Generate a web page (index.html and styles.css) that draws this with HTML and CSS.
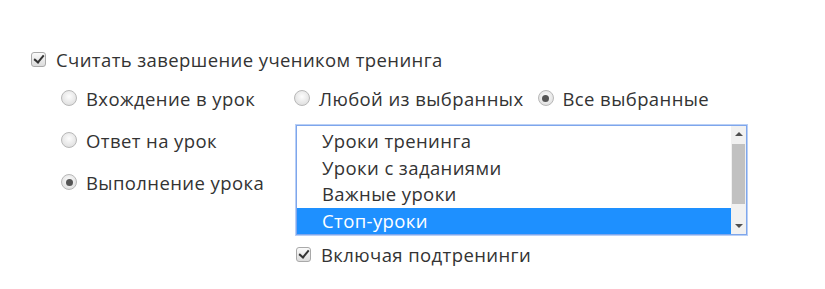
FILE: index.html
```html
<!DOCTYPE html>
<html lang="ru">
<head>
    <meta charset="UTF-8">
    <title>Завершение тренинга</title>
    <link rel="stylesheet" href="styles.css">
</head>
<body>
    <form class="completion">
        <!-- main switch -->
        <label class="check_row">
            <span class="check checked"></span>
            Считать завершение учеником тренинга
        </label>

        <div class="columns">
            <!-- what counts as completion -->
            <div class="left_col">
                <label class="radio_row"><span class="radio"></span>Вхождение в урок</label>
                <label class="radio_row"><span class="radio"></span>Ответ на урок</label>
                <label class="radio_row"><span class="radio checked"></span>Выполнение урока</label>
            </div>

            <!-- which lessons -->
            <div class="right_col">
                <div class="mode_row">
                    <label class="radio_row"><span class="radio"></span>Любой из выбранных</label>
                    <label class="radio_row"><span class="radio checked"></span>Все выбранные</label>
                </div>

                <div class="listbox">
                    <ul class="options">
                        <li>Уроки тренинга</li>
                        <li>Уроки с заданиями</li>
                        <li>Важные уроки</li>
                        <li class="selected">Стоп-уроки</li>
                    </ul>
                    <div class="scrollbar">
                        <span class="arrow up"></span>
                        <span class="thumb"></span>
                        <span class="arrow down"></span>
                    </div>
                </div>

                <label class="check_row sub">
                    <span class="check checked"></span>
                    Включая подтренинги
                </label>
            </div>
        </div>
    </form>
</body>
</html>
```

FILE: styles.css
```css
body {
    margin: 0;
    background: #fff;
    color: #333;
    font-family: "Open Sans", sans-serif;
    font-size: 18.5px;
    letter-spacing: 0.4px;
}

.completion {
    padding: 44px 0 0 31px;
}

.check_row {
    display: flex;
    align-items: center;
    height: 30px;
}

.check {
    width: 13px;
    height: 13px;
    border: 1px solid #a9a9a9;
    border-radius: 3px;
    background: linear-gradient(#fafafa, #dcdcdc);
    margin-right: 10px;
    position: relative;
    flex-shrink: 0;
}

.check.checked::after {
    content: "";
    position: absolute;
    left: 4px;
    top: 0px;
    width: 4px;
    height: 8px;
    border: solid #333;
    border-width: 0 2.5px 2.5px 0;
    transform: rotate(40deg);
}

.columns {
    display: flex;
    padding: 3px 0 0 30px;
}

.left_col {
    width: 233px;
}

.radio_row {
    display: flex;
    align-items: center;
    height: 42px;
    white-space: nowrap;
}

.radio {
    width: 14px;
    height: 14px;
    border: 1px solid #b8b8b8;
    border-radius: 50%;
    background: radial-gradient(circle at 50% 40%, #fdfdfd, #d8d8d8);
    margin-right: 9px;
    position: relative;
    flex-shrink: 0;
}

.radio.checked::after {
    content: "";
    position: absolute;
    left: 3.5px;
    top: 3.5px;
    width: 7px;
    height: 7px;
    border-radius: 50%;
    background: #555;
}

.mode_row {
    display: flex;
    gap: 14px;
    height: 30px;
    align-items: center;
    margin-top: 6px;
}

.mode_row .radio_row {
    height: 30px;
}

.listbox {
    display: flex;
    width: 449px;
    height: 108px;
    border: 1px solid #7ea6ec;
    box-shadow: 0 0 0 1px #b9cff5;
    margin: 12px 0 0 2px;
}

.options {
    list-style: none;
    margin: 0;
    padding: 2px 0 0;
    flex: 1;
    overflow: hidden;
}

.options li {
    height: 26.5px;
    line-height: 26px;
    padding-left: 25px;
}

.options li.selected {
    background: #1e90ff;
    color: #fff;
}

.scrollbar {
    width: 15px;
    background: #f1f1f1;
    display: flex;
    flex-direction: column;
    align-items: center;
}

.arrow {
    width: 0;
    height: 0;
    border-left: 4px solid transparent;
    border-right: 4px solid transparent;
    margin: 6px 0;
}

.arrow.up {
    border-bottom: 4px solid #505050;
}

.arrow.down {
    border-top: 4px solid #505050;
}

.thumb {
    width: 13px;
    margin-top: 2px;
    height: 50px;
    background: #c1c1c1;
    flex: 1;
    margin-bottom: 14px;
}

.check_row.sub {
    margin-top: 4px;
    padding-left: 2px;
    height: 30px;
}
```
